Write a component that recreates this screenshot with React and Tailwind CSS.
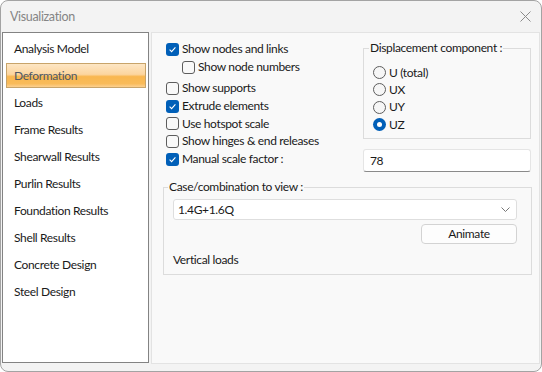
import React from "react";

function Check({ checked }) {
  if (checked) {
    return (
      <span className="w-[13px] h-[13px] rounded-[3px] bg-[#005fb8] flex items-center justify-center shrink-0">
        <svg width="9" height="9" viewBox="0 0 9 9">
          <path d="M1.6 4.7 L3.6 6.6 L7.4 2.3" stroke="white" strokeWidth="1.1" fill="none" />
        </svg>
      </span>
    );
  }
  return <span className="w-[13px] h-[13px] rounded-[3px] border border-[#5d5d5d] bg-[#f9f9f9] shrink-0" />;
}

function Radio({ checked }) {
  if (checked) {
    return (
      <span className="w-[13px] h-[13px] rounded-full bg-[#005fb8] flex items-center justify-center shrink-0">
        <span className="w-[5px] h-[5px] rounded-full bg-white" />
      </span>
    );
  }
  return <span className="w-[13px] h-[13px] rounded-full border border-[#5d5d5d] bg-[#f6f6f6] shrink-0" />;
}

function CheckRow({ checked, label, h = "h-[18px]", indent = false }) {
  return (
    <div className={`flex items-center gap-[3px] ${h} ${indent ? "pl-[16px]" : ""}`}>
      <Check checked={checked} />
      <span>{label}</span>
    </div>
  );
}

function RadioRow({ checked, label, h = "h-[17px]" }) {
  return (
    <div className={`flex items-center gap-[3px] ${h}`}>
      <Radio checked={checked} />
      <span>{label}</span>
    </div>
  );
}

const items = [
  "Analysis Model",
  "Deformation",
  "Loads",
  "Frame Results",
  "Shearwall Results",
  "Purlin Results",
  "Foundation Results",
  "Shell Results",
  "Concrete Design",
  "Steel Design",
];

export default function App() {
  return (
    <div className="w-[542px] h-[372px] bg-white">
      <div className="w-[542px] h-[372px] rounded-[8px] border border-[#a3a3a3] bg-[#f3f3f3] flex flex-col overflow-hidden font-['Lato',sans-serif] text-[12px] leading-[16px] tracking-[-0.35px] text-[#1a1a1a]">
        <div className="h-[31px] shrink-0 flex items-center justify-between pl-[9px] pr-[10px]">
          <span className="text-[12.5px] text-[#858585]">Visualization</span>
          <svg width="11" height="11" viewBox="0 0 11 11">
            <path d="M0.5 0.5 L10.5 10.5 M10.5 0.5 L0.5 10.5" stroke="#8a8a8a" strokeWidth="1" />
          </svg>
        </div>
        <div className="flex gap-[2px] pl-[1px] pr-[1px] h-[331px]">
          <div className="w-[147px] h-[331px] border border-[#838383] bg-white pt-[2px] pl-[3px] pr-[1px]">
            {items.map((it) =>
              it === "Deformation" ? (
                <div key={it} className="h-[27px] flex items-center">
                  <div className="h-[25px] w-[140px] pl-[7px] flex items-center border border-[#c8a46a] bg-[linear-gradient(to_bottom,#fde6c4_0%,#fcd59f_45%,#f9b750_55%,#f9bb5a_85%,#fcd090_100%)] text-[#4f5866]">
                    {it}
                  </div>
                </div>
              ) : (
                <div key={it} className="h-[27px] flex items-center pl-[8px]">
                  {it}
                </div>
              )
            )}
          </div>
          <div className="flex-1 h-[332px] border border-[#e3e3e3] bg-[#f9f9f9] flex flex-col">
            <div className="flex pt-[7px]">
              <div className="pl-[14px] flex flex-col w-[200px]">
                <CheckRow checked label="Show nodes and links" />
                <CheckRow label="Show node numbers" indent />
                <div className="h-[3px]" />
                <CheckRow label="Show supports" />
                <CheckRow checked label="Extrude elements" />
                <CheckRow label="Use hotspot scale" h="h-[17px]" />
                <CheckRow label="Show hinges & end releases" />
                <CheckRow checked label="Manual scale factor :" />
              </div>
              <div className="ml-auto mr-[8px] w-[168px] flex flex-col">
                <fieldset className="border border-[#dcdcdc] pl-[9px] pt-[8px] pb-[5px]">
                  <legend className="-ml-[4px] px-[1px]">Displacement component :</legend>
                  <RadioRow label="U (total)" />
                  <RadioRow label="UX" />
                  <RadioRow label="UY" h="h-[18px]" />
                  <RadioRow checked label="UZ" />
                </fieldset>
                <div className="mt-[10px] h-[23px] bg-white border border-[#e5e5e5] border-b-[#8a8a8a] rounded-[3px] flex items-center pl-[6px]">
                  78
                </div>
              </div>
            </div>
            <fieldset className="mt-[7px] ml-[11px] mr-[7px] border border-[#dcdcdc] pl-[9px] pr-[14px] pb-[6px]">
              <legend className="-ml-[5px] px-[1px]">Case/combination to view :</legend>
              <div className="mt-[4px] h-[21px] bg-white border border-[#dedede] rounded-[3px] flex items-center justify-between pl-[4px] pr-[6px]">
                <span>1.4G+1.6Q</span>
                <svg width="9" height="5" viewBox="0 0 9 5">
                  <path d="M0.5 0.5 L4.5 4.5 L8.5 0.5" stroke="#777" strokeWidth="1" fill="none" />
                </svg>
              </div>
              <div className="flex justify-end mt-[4px]">
                <div className="w-[96px] h-[20px] bg-[#fdfdfd] border border-[#d3d3d3] rounded-[4px] flex items-center justify-center">
                  Animate
                </div>
              </div>
              <div className="mt-[8px]">Vertical loads</div>
            </fieldset>
          </div>
        </div>
      </div>
    </div>
  );
}
